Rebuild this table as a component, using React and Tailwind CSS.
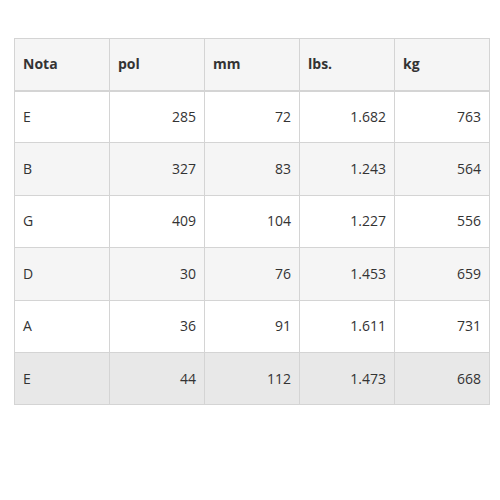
export default function App() {
  const rows = [
    ["E", "285", "72", "1.682", "763"],
    ["B", "327", "83", "1.243", "564"],
    ["G", "409", "104", "1.227", "556"],
    ["D", "30", "76", "1.453", "659"],
    ["A", "36", "91", "1.611", "731"],
    ["E", "44", "112", "1.473", "668"],
  ];
  const bgs = ["bg-white", "bg-[#f5f5f5]", "bg-white", "bg-[#f5f5f5]", "bg-white", "bg-[#e8e8e8]"];
  return (
    <div className="w-[500px] h-[500px] bg-white pt-[38px] pl-[14px]" style={{ fontFamily: '"Open Sans", sans-serif' }}>
      <table className="table-fixed border-collapse w-[476px] text-[14px] text-[#333]">
        <thead>
          <tr className="bg-[#f5f5f5]">
            {["Nota", "pol", "mm", "lbs.", "kg"].map((h) => (
              <th key={h} className="h-[52px] border border-[#d4d4d4] border-b-2 px-2 text-left font-bold leading-5 align-middle">
                {h}
              </th>
            ))}
          </tr>
        </thead>
        <tbody>
          {rows.map((r, i) => (
            <tr key={i} className={bgs[i]}>
              {r.map((c, j) => (
                <td
                  key={j}
                  className={
                    "h-[52.4px] border border-[#d4d4d4] px-2 leading-5 align-middle " +
                    (j === 0 ? "text-left" : "text-right")
                  }
                >
                  {c}
                </td>
              ))}
            </tr>
          ))}
        </tbody>
      </table>
    </div>
  );
}
